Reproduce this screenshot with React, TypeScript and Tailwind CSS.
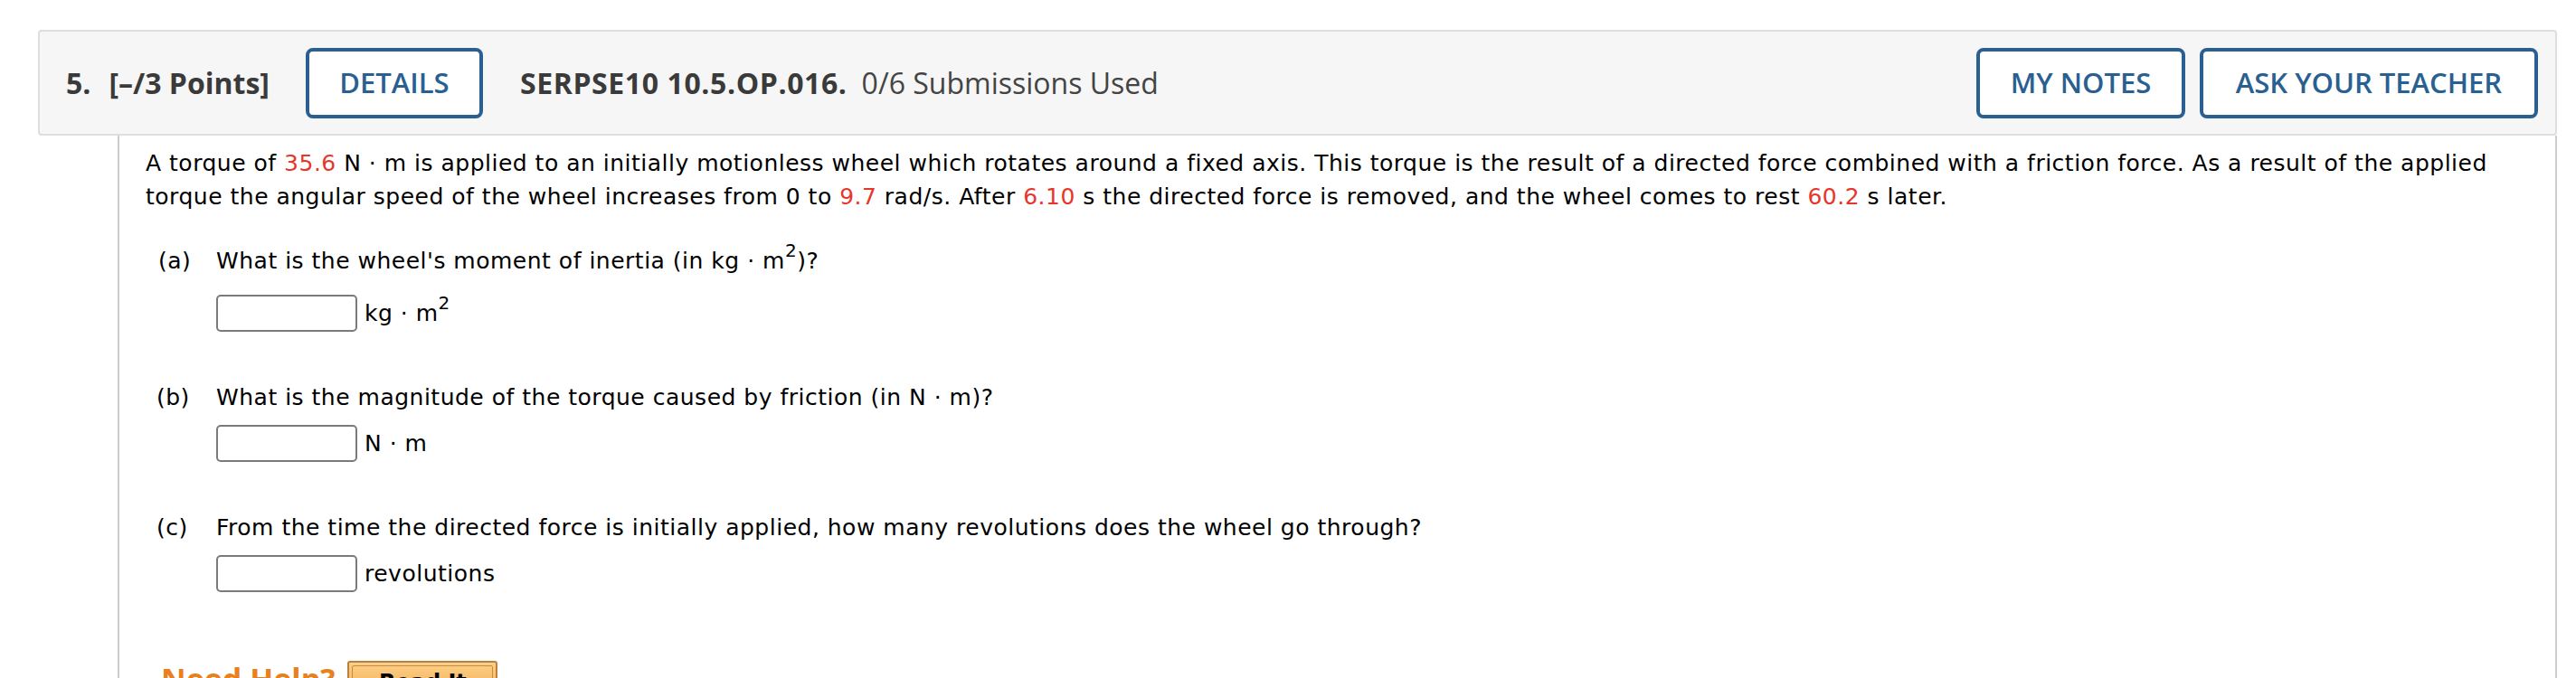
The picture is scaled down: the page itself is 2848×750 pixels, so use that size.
import React from "react";

const red = "text-[#e8352b]";

function Num({ children }: { children: React.ReactNode }) {
  return <span className={red}>{children}</span>;
}

function Sq() {
  return <sup className="-top-[13px] text-[20px]">2</sup>;
}

function AnswerBox() {
  return (
    <input
      type="text"
      className="h-[41px] w-[156px] rounded-[5px] border-2 border-[#7a7a7a] bg-white px-2 outline-none"
    />
  );
}

function HeaderButton({ label, className = "" }: { label: string; className?: string }) {
  return (
    <button
      className={`flex h-[78px] items-center justify-center rounded-[8px] border-4 border-[#2a5f91] bg-white text-[31px] font-semibold text-[#2a5f91] ${className}`}
    >
      {label}
    </button>
  );
}

export default function App() {
  return (
    <div className="min-h-[750px] bg-white pl-[42px] pr-[21px] pt-[33px] font-['DejaVu_Sans',Verdana,sans-serif] text-black">
      <header className="flex h-[117px] items-center rounded-[4px] border-2 border-[#dedede] bg-[#f6f6f6] pl-[29px] pr-[19px] font-['Open_Sans',sans-serif] text-[32px] text-[#3a3a3a]">
        <span className="font-bold">5.</span>
        <span className="ml-[20px] font-bold">[–/3 Points]</span>
        <HeaderButton label="DETAILS" className="ml-[40px] w-[196px]" />
        <span className="ml-[41px] font-bold tracking-[0.6px]">SERPSE10 10.5.OP.016.</span>
        <span className="ml-[16px] text-[#444444]">0/6 Submissions Used</span>
        <div className="ml-auto flex gap-[16px]">
          <HeaderButton label="MY NOTES" className="w-[231px]" />
          <HeaderButton label="ASK YOUR TEACHER" className="w-[374px]" />
        </div>
      </header>

      <div className="ml-[88px] h-[600px] border-x-2 border-[#cccccc] pl-[29px] pr-[30px] text-[25px] tracking-[0.5px]">
        <p className="pt-[12px] leading-[37px]">
          A torque of <Num>35.6</Num> N · m is applied to an initially motionless wheel which rotates around a
          fixed axis. This torque is the result of a directed force combined with a friction force. As a result of
          the applied torque the angular speed of the wheel increases from 0 to <Num>9.7</Num> rad/s. After{" "}
          <Num>6.10</Num> s the directed force is removed, and the wheel comes to rest <Num>60.2</Num> s later.
        </p>

        <div className="mt-[34px] flex h-[37px] items-center">
          <span className="w-[78px] pl-[14px]">(a)</span>
          <span>
            What is the wheel's moment of inertia (in kg · m<Sq />)?
          </span>
        </div>
        <div className="ml-[78px] mt-[19px] flex items-center gap-[8px]">
          <AnswerBox />
          <span>
            kg · m<Sq />
          </span>
        </div>

        <div className="mt-[54px] flex h-[37px] items-center">
          <span className="w-[78px] pl-[12px]">(b)</span>
          <span>What is the magnitude of the torque caused by friction (in N · m)?</span>
        </div>
        <div className="ml-[78px] mt-[12px] flex items-center gap-[8px]">
          <AnswerBox />
          <span>N · m</span>
        </div>

        <div className="mt-[54px] flex h-[37px] items-center">
          <span className="w-[78px] pl-[12px]">(c)</span>
          <span>From the time the directed force is initially applied, how many revolutions does the wheel go through?</span>
        </div>
        <div className="ml-[78px] mt-[12px] flex items-center gap-[8px]">
          <AnswerBox />
          <span>revolutions</span>
        </div>

        <div className="ml-[17px] mt-[76px] flex items-start gap-[14px] tracking-normal">
          <span className="font-['Open_Sans',sans-serif] text-[34px] font-bold leading-[40px] text-[#e8801e]">
            Need Help?
          </span>
          <button className="h-[48px] w-[166px] rounded-[3px] border-2 border-[#b9823f] bg-gradient-to-b from-[#fbd08a] to-[#f2a53a] p-[3px]">
            <span className="flex h-full w-full items-center justify-center rounded-[2px] border border-[#c98a3c] text-[24px] font-bold text-black">
              Read It
            </span>
          </button>
        </div>
      </div>
    </div>
  );
}
